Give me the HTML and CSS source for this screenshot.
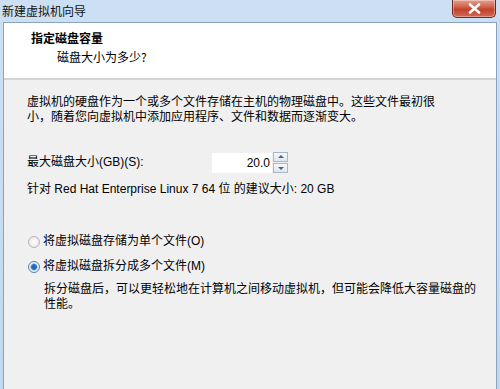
FILE: index.html
```html
<!DOCTYPE html>
<html lang="zh-CN">
<head>
  <meta charset="UTF-8" />
  <title>新建虚拟机向导</title>
  <link rel="stylesheet" href="styles.css">
</head>
<body>
  <div class="window">
    <div class="titlebar">
      <span class="title">新建虚拟机向导</span>
      <button class="close" aria-label="关闭">
        <svg width="13" height="11" viewBox="0 0 13 11"><path d="M2 1.5 L11 9.5 M11 1.5 L2 9.5" stroke="#fff" stroke-width="2.6" stroke-linecap="round"/></svg>
      </button>
    </div>
    <div class="frame">
      <header class="head">
        <h1>指定磁盘容量</h1>
        <p>磁盘大小为多少?</p>
      </header>
      <main class="content">
        <p class="intro">虚拟机的硬盘作为一个或多个文件存储在主机的物理磁盘中。这些文件最初很<br>小，随着您向虚拟机中添加应用程序、文件和数据而逐渐变大。</p>

        <div class="size-row">
          <label for="size">最大磁盘大小(GB)(S):</label>
          <div class="spin">
            <input id="size" type="text" value="20.0" />
            <div class="spin-btns">
              <span class="up"></span>
              <span class="down"></span>
            </div>
          </div>
        </div>
        <p class="hint">针对 Red Hat Enterprise Linux 7 64 位 的建议大小: 20 GB</p>

        <div class="radios">
          <label><span class="radio"></span>将虚拟磁盘存储为单个文件(O)</label>
          <label><span class="radio checked"></span>将虚拟磁盘拆分成多个文件(M)</label>
          <p class="note">拆分磁盘后，可以更轻松地在计算机之间移动虚拟机，但可能会降低大容量磁盘的<br>性能。</p>
        </div>
      </main>
    </div>
  </div>
</body>
</html>
```

FILE: styles.css
```css
body {
  margin: 0;
  font-family: 'Liberation Sans', 'Noto Sans CJK SC', sans-serif;
  font-size: 12px;
  color: #000;
  background: #f0f0f0;
}

.window {
  width: 500px;
  height: 389px;
  display: flex;
  flex-direction: column;
  background: linear-gradient(#cde0f3, #c1d8ee);
  overflow: hidden;
}

.titlebar {
  height: 22px;
  display: flex;
  align-items: flex-start;
  justify-content: space-between;
  flex-shrink: 0;
}

.title {
  padding: 2px 0 0 2px;
  font-size: 12px;
  color: #111;
  font-family: 'Noto Sans CJK SC', sans-serif;
}

.close {
  width: 44px;
  height: 18px;
  margin-right: 4px;
  padding: 0;
  border: 1px solid #6d2a22;
  border-top: none;
  border-radius: 0 0 5px 5px;
  background: linear-gradient(#e4a190, #cf5a43 45%, #c2412a 55%, #d06a52);
  display: flex;
  align-items: center;
  justify-content: center;
  box-shadow: inset 0 0 0 1px rgba(255, 255, 255, 0.35);
}

.frame {
  flex: 1;
  margin: 0 3px;
  border: 1px solid #8aa4c0;
  border-bottom: none;
  background: #f0f0f0;
  display: flex;
  flex-direction: column;
}

.head {
  background: #fff;
  height: 57px;
  padding: 6px 0 0 27px;
  box-sizing: border-box;
  border-bottom: 2px solid #d5d5d5;
  flex-shrink: 0;
  font-family: 'Noto Sans CJK SC', sans-serif;
}

.head h1 {
  margin: 0;
  font-size: 12px;
  font-weight: bold;
  line-height: 18px;
}

.head p {
  margin: 1px 0 0 26px;
  line-height: 18px;
}

.content {
  padding: 15px 0 0 23px;
  line-height: 15px;
}

.intro {
  margin: 0;
}

.size-row {
  margin-top: 27px;
  display: flex;
  align-items: center;
}

.size-row label {
  width: 185px;
}

.spin {
  display: flex;
  align-items: center;
  gap: 1px;
}

.spin input {
  width: 60px;
  height: 20px;
  box-sizing: border-box;
  border: none;
  padding: 0 2px 0 0;
  text-align: right;
  font: inherit;
  background: #fff;
}

.spin-btns {
  display: flex;
  flex-direction: column;
  gap: 1px;
}

.spin-btns span {
  width: 13px;
  height: 8px;
  border: 1px solid #a9b8c9;
  background: linear-gradient(#f6f8fb, #dfe6ee);
  position: relative;
}

.spin-btns span::after {
  content: '';
  position: absolute;
  left: 4px;
  border-left: 3px solid transparent;
  border-right: 3px solid transparent;
}

.spin-btns .up::after {
  top: 2px;
  border-bottom: 3px solid #4d6185;
}

.spin-btns .down::after {
  top: 3px;
  border-top: 3px solid #4d6185;
}

.hint {
  margin: 9px 0 0;
}

.radios {
  margin-top: 32px;
  display: flex;
  flex-direction: column;
}

.radios label {
  display: flex;
  align-items: center;
  height: 25px;
}

.radio {
  width: 12px;
  height: 12px;
  border: 1px solid #b5b5b5;
  border-radius: 50%;
  background: radial-gradient(#fff, #e2e2e2);
  margin: 0 3px 0 1px;
  box-sizing: border-box;
}

.radio.checked {
  border-color: #5f7fa8;
  background: radial-gradient(circle, #1f6dc0 0 2.5px, #7fb0e3 3px, #e8f0fa 4px);
}

.note {
  margin: 3px 0 0 17px;
}
```
